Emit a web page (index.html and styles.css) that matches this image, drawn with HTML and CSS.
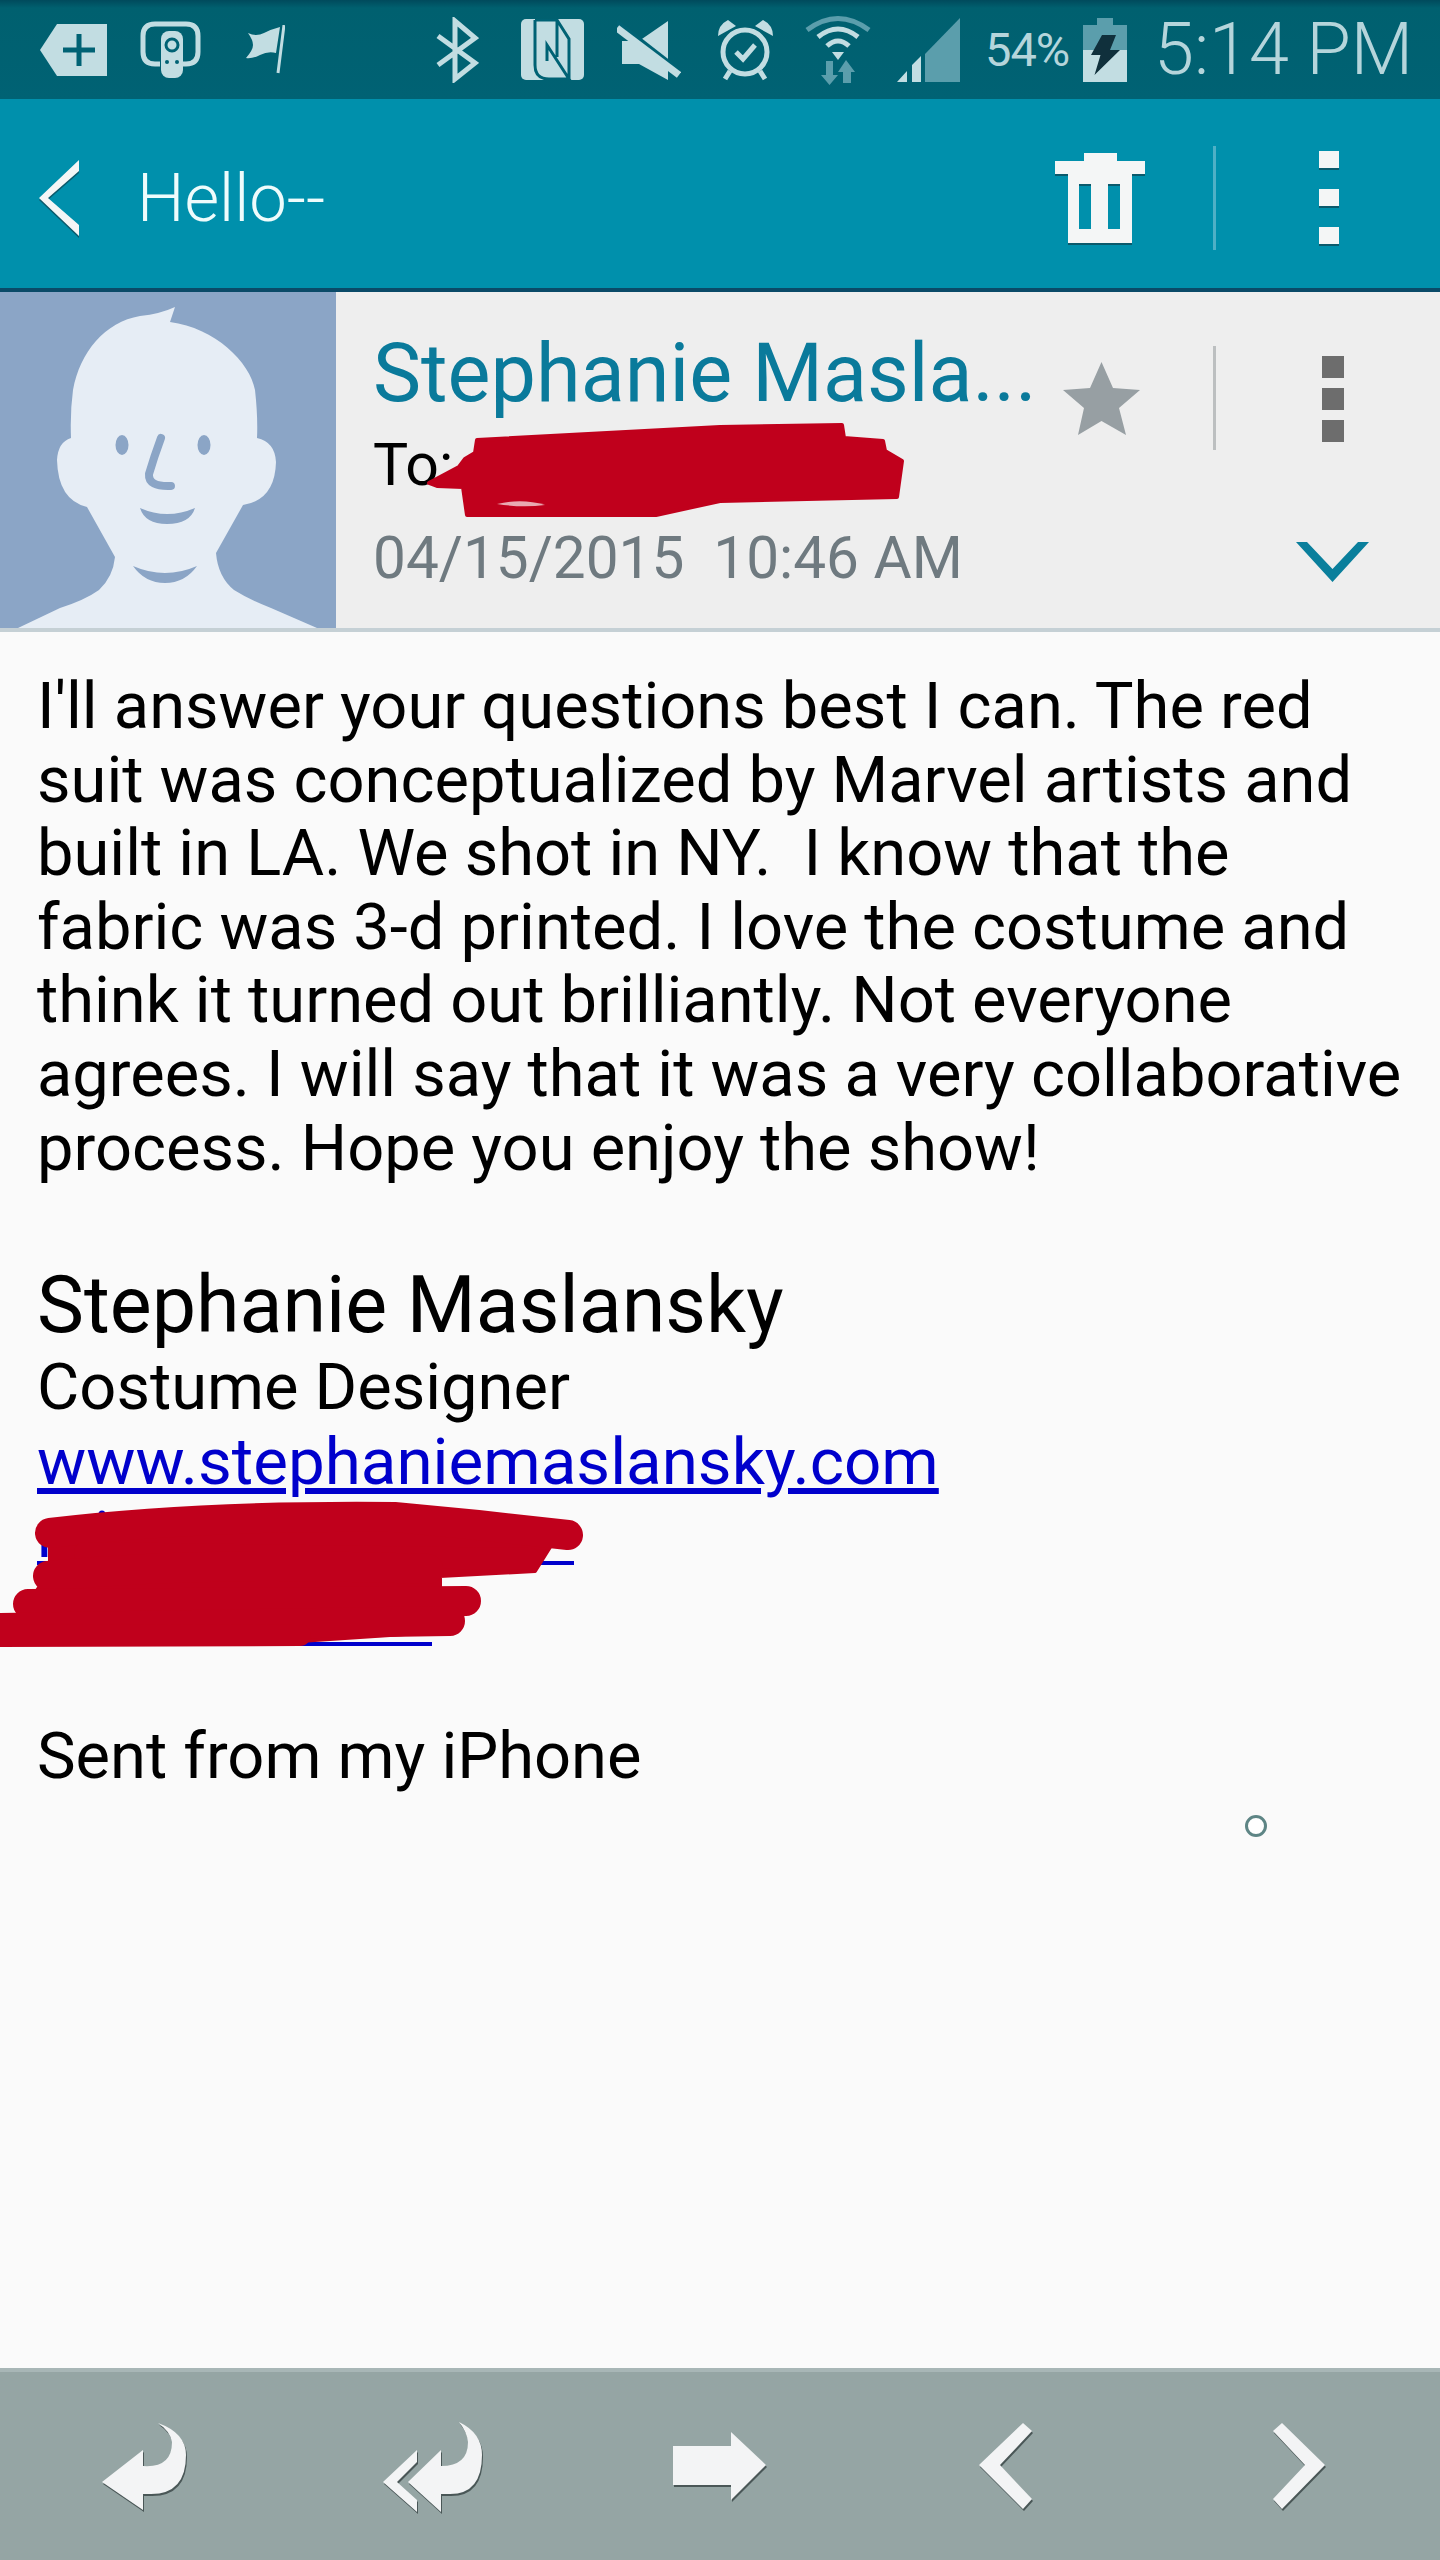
FILE: index.html
```html
<!DOCTYPE html>
<html lang="en">
<head>
    <meta charset="UTF-8">
    <meta name="viewport" content="width=device-width, initial-scale=1.0">
    <title>Hello--</title>
    <link rel="stylesheet" href="styles.css">
</head>
<body>
    <div class="phone">
        <div class="status-bar">
            <svg class="ic ic-tag" viewBox="0 0 67 52"><path class="lt" d="M0 26 17 0H67V52H17Z"/><path class="gap" d="M39 10V42M23 26H55"/></svg>
            <svg class="ic ic-remote" viewBox="0 0 61 57"><path class="line" d="M20 43H15Q3 43 3 31V15Q3 3 15 3H46Q58 3 58 15V31Q58 43 46 43H43"/><rect class="lt" x="21" y="10" width="22" height="47" rx="8"/><circle class="gap thin" cx="32" cy="24" r="6"/><circle class="dk" cx="27" cy="41" r="2"/><circle class="dk" cx="37" cy="41" r="2"/></svg>
            <svg class="ic ic-flag" viewBox="0 0 39 49"><path class="lt" d="M2 8Q10 12 18 8T34 2L30 28Q22 26 14 30T0 33Q7 25 7 20T2 8Z"/><path class="line thin" d="M38 0 32 48"/></svg>
            <svg class="ic ic-bt" viewBox="0 0 44 66"><path class="line" d="M3 19 40 46 20 62V4L40 21 3 48"/></svg>
            <svg class="ic ic-nfc" viewBox="0 0 63 61"><rect class="lt" width="63" height="61" rx="5"/><path class="gap thin" d="M14 1V46Q14 60 28 60H48L26 26V42M14 1H36L48 20V60M36 1V38"/></svg>
            <svg class="ic ic-mute" viewBox="0 0 64 60"><path class="lt" d="M5 21H22L51 1V60L22 44H5Z"/><path class="gap wide" d="M-2 2 62 52"/><path class="line wide" d="M0 8 62 55"/></svg>
            <svg class="ic ic-alarm" viewBox="0 0 59 62"><circle class="line" cx="29" cy="33" r="22"/><path class="lt" d="M2 17Q2 6 12 1L20 7ZM57 17Q57 6 47 1L39 7Z"/><path class="line" d="M14 52 9 60M44 52 49 60M20 33 27 40 39 26"/></svg>
            <svg class="ic ic-wifi" viewBox="0 0 66 70"><path class="line dim" d="M2 15Q33 -8 64 15"/><path class="line" d="M13 22Q33 6 53 22M22 31Q33 21 44 31"/><path class="lt" d="M27 37H39L33 45Z"/><path class="dimfill" d="M21 46H28V60H33L24.500 70 16 60H21ZM41 45 50 57H46V68H38V57H33Z"/></svg>
            <svg class="ic ic-signal" viewBox="0 0 63 64"><path class="dimfill" d="M28 36 63 0V64H28Z"/><path class="lt" d="M0 64 10 53V64ZM15 64V47L24 38V64Z"/></svg>
            <span class="battery-pct">54%</span>
            <svg class="ic ic-battery" viewBox="0 0 44 64"><path class="dimfill" d="M14 0H30V7H44V32H0V7H14Z"/><rect class="lt" y="32" width="44" height="32"/><path class="bolt" d="M19 17H33L27 32H37L11.500 57 17.500 37H8Z"/></svg>
            <span class="clock">5:14 PM</span>
        </div>

        <div class="app-bar">
            <svg class="back" viewBox="0 0 41 76"><path d="M40 0V11L9 38 40 65V76L0 38Z"/></svg>
            <span class="subject">Hello--</span>
            <svg class="trash" viewBox="0 0 90 90"><path d="M29 0H62V8H90V21H77V90H13V21H0V8H29ZM24 31V76H36V31ZM53 31V76H65V31Z" fill-rule="evenodd"/></svg>
            <div class="divider"></div>
            <div class="dots">
                <span></span>
                <span></span>
                <span></span>
            </div>
        </div>

        <div class="mail-header">
            <svg class="avatar" viewBox="0 0 336 336">
                <rect class="av-bg" width="336" height="336"/>
                <path class="av-face" d="M175 15 170 30C215 36 250 70 255 98Q258 125 257 146Q275 150 276 170Q275 208 243 213L216 261Q218 285 234 298Q250 308 271 316L317 336H18L60 316Q85 308 99 298Q113 285 115 265L87 215Q58 208 57 168Q58 150 71 146Q70 120 73 98C80 60 105 30 140 24Q160 22 175 15Z"/>
                <ellipse class="av-bg" cx="122" cy="153" rx="6.500" ry="10"/>
                <ellipse class="av-bg" cx="204" cy="153" rx="6.500" ry="10"/>
                <path class="av-nose" d="M161 146Q154 165 149 182Q148 195 171 194"/>
                <path class="av-bg" d="M140 216Q167 228 195 216Q190 232 167 232Q145 232 140 216Z"/>
                <path class="av-bg" d="M133 274Q165 288 197 274Q185 291 165 291Q145 291 133 274Z"/>
            </svg>
            <div class="sender">
                <div class="sender-name">Stephanie Masla...</div>
                <div class="sender-to">To:</div>
                <div class="sender-date">04/15/2015&nbsp; 10:46 AM</div>
            </div>
            <svg class="star" viewBox="0 0 77 73"><path d="M38.500 0 50 26 77 28 56 46 63 73 38.500 59 15 73 21 46 0 28 27 26Z"/></svg>
            <div class="divider divider-grey"></div>
            <div class="header-side">
                <div class="dots dots-grey">
                    <span></span>
                    <span></span>
                    <span></span>
                </div>
                <svg class="expand" viewBox="0 0 73 40"><path d="M0 0H11L36.500 27 62 0H73L36.500 40Z"/></svg>
            </div>
        </div>

        <div class="mail-body">
            <p class="msg">I'll answer your questions best I can. The red suit was conceptualized by Marvel artists and built in LA. We shot in NY.&nbsp; I know that the fabric was 3-d printed. I love the costume and think it turned out brilliantly. Not everyone agrees. I will say that it was a very collaborative process. Hope you enjoy the show!</p>
            <div class="sig-name">Stephanie Maslansky</div>
            <div>Costume Designer</div>
            <div><a class="site-link" href="#">www.stephaniemaslansky.com</a></div>
            <div class="hidden-link hidden-link-long"><a href="#">mi</a></div>
            <div class="hidden-link hidden-link-short"></div>
            <div class="sent">Sent from my iPhone</div>
        </div>

        <div class="bottom-bar">
            <svg class="act" viewBox="0 0 120 120"><path d="M18 76 59 44V60Q88 62 88 36 86 25 74 17 102 27 102 49 102 88 67 88H59V104Z"/></svg>
            <svg class="act" viewBox="0 0 120 120"><path d="M36 76 69 44V60Q96 60 96 36 95 26 87 16 110 27 110 49 110 88 78 88H69V106ZM11 76 45 44V56L25 76 45 94V106Z"/></svg>
            <svg class="act" viewBox="0 0 120 120"><path d="M13 40H71V26L106 59 71 94V79H13Z"/></svg>
            <svg class="act" viewBox="0 0 120 120"><path d="M31 59 75 17 84 25 52 59 84 93 75 103Z"/></svg>
            <svg class="act" viewBox="0 0 120 120"><path d="M89 59 46 17 37 25 69 59 37 93 46 103Z"/></svg>
        </div>

        <!-- marker scribbles and touch dot sit on top of the mail -->
        <svg class="scribble scribble-to" viewBox="0 0 480 100">
            <path class="brush" d="M2 60 32 44 38 36 48 30 50 17 293 4 415 2 417 15 456 18 458 28 475 38 470 74 293 78 229 92 40 92 36 64 10 63Z"/>
            <path class="streak" d="M70 81Q95 75 118 82 95 85 70 81Z"/>
        </svg>
        <svg class="scribble scribble-sig" viewBox="0 0 590 150">
            <path class="brush" d="M50 25 395 8 480 20 560 30 535 70 440 75 440 90 470 105 450 130 300 140 30 140 30 100 50 70Z"/>
            <path class="stroke" d="M50 32Q200 14 395 16L478 24 568 34"/>
            <path class="stroke stroke-small" d="M85 52 530 58"/>
            <path class="stroke" d="M48 75Q200 60 428 68"/>
            <path class="stroke" d="M28 103 466 100"/>
            <path class="stroke" d="M0 127 450 120"/>
            <path class="stroke stroke-small" d="M-10 135 300 134"/>
        </svg>
        <div class="touch-dot"></div>
    </div>
</body>
</html>
```

FILE: styles.css
```css
* { box-sizing: border-box; }
html, body { margin: 0; padding: 0; }
body { font-family: Roboto, "Liberation Sans", sans-serif; background: #fafafa; }
.phone { position: relative; width: 1440px; height: 2560px; display: flex; flex-direction: column; overflow: hidden; }

/* status bar */
.status-bar { height: 99px; display: flex; align-items: center; background: linear-gradient(#004a5c, #00606f 8px, #006274); color: #b5d5db; }
.ic { display: block; flex: none; }
.lt { fill: #c2dde2; }
.dk { fill: #006274; }
.dimfill { fill: #5b9eac; }
.bolt { fill: #10303c; }
.line { fill: none; stroke: #c2dde2; stroke-width: 5; }
.gap { fill: none; stroke: #006274; stroke-width: 5; }
.thin { stroke-width: 3; }
.wide { stroke-width: 7; }
.dim { stroke: #5b9eac; }
.ic-tag { width: 67px; height: 52px; margin-left: 40px; }
.ic-remote { width: 61px; height: 57px; margin-left: 33px; }
.ic-flag { width: 39px; height: 49px; margin-left: 45px; }
.ic-bt { width: 44px; height: 66px; margin-left: 150px; }
.ic-nfc { width: 63px; height: 61px; margin-left: 42px; }
.ic-mute { width: 64px; height: 60px; margin-left: 33px; }
.ic-alarm { width: 59px; height: 62px; margin-left: 35px; }
.ic-wifi { width: 66px; height: 70px; margin-left: 30px; }
.ic-signal { width: 63px; height: 64px; margin-left: 26px; }
.ic-battery { width: 44px; height: 64px; margin-left: 13px; }
.battery-pct { width: 85px; margin-left: 25px; font-size: 47px; letter-spacing: -1px; white-space: nowrap; }
.clock { margin-left: 27px; font-size: 72px; font-weight: 300; white-space: nowrap; }

/* title bar */
.app-bar { height: 193px; padding-top: 8px; display: flex; align-items: center; background: #0090ac; border-bottom: 4px solid #0a4a68; color: #eefcfc; }
.back { width: 41px; height: 76px; margin-left: 39px; fill: #f4f6f6; filter: drop-shadow(0 2px 0 #0b5a6c); }
.subject { margin-left: 57px; width: 918px; font-size: 67px; font-weight: 300; }
.trash { width: 90px; height: 90px; fill: #f4f6f6; filter: drop-shadow(0 2px 0 #0b5a6c); }
.divider { width: 3px; height: 104px; margin-left: 68px; background: #4fb0c6; }
.dots { width: 20px; margin-left: 103px; display: flex; flex-direction: column; gap: 21px; }
.dots span { display: block; height: 17px; background: #f4f6f6; box-shadow: 0 2px 0 #0b5a6c; }

/* sender block */
.mail-header { height: 340px; display: flex; align-items: flex-start; background: #eeeeee; border-bottom: 4px solid #c5d0d5; }
.avatar { display: block; flex: none; width: 336px; height: 336px; }
.av-bg { fill: #8ba5c6; }
.av-face { fill: #e6edf5; }
.av-nose { fill: none; stroke: #8ba5c6; stroke-width: 8; stroke-linecap: round; }
.sender { width: 727px; padding-left: 37px; }
.sender-name { margin-top: 38px; height: 88px; font-size: 81px; line-height: 88px; color: #0a7a9b; white-space: nowrap; }
.sender-to { margin-top: 16px; height: 62px; font-size: 59px; line-height: 62px; color: #000; }
.sender-date { margin-top: 31px; font-size: 58.500px; line-height: 62px; color: #6f7a80; white-space: nowrap; }
.star { flex: none; width: 77px; height: 73px; margin-top: 70px; fill: #979fa3; }
.divider-grey { margin-top: 54px; margin-left: 73px; background: #bcbfc0; }
.header-side { display: flex; flex-direction: column; align-items: center; margin-left: 80px; }
.dots-grey { width: 22px; margin: 64px 0 0; gap: 10px; }
.dots-grey span { height: 22px; background: #6d6d6d; box-shadow: none; }
.expand { display: block; width: 73px; height: 40px; margin-top: 100px; fill: #0a7f9c; }

/* mail text */
.mail-body { flex: 1; padding: 38px 30px 0 37px; font-size: 65px; line-height: 73.6px; color: #000; }
.msg { margin: 0 0 74px; }
.sig-name { font-size: 79px; line-height: 92px; }
.mail-body a { color: #0000cc; }
.site-link { font-size: 65.500px; }
.hidden-link { height: 73.6px; }
.hidden-link-long { height: 66px; width: 537px; border-bottom: 4px solid #0000cc; }
.hidden-link-long a { text-decoration: none; }
.hidden-link-short { height: 81px; width: 395px; border-bottom: 4px solid #0000cc; }
.sent { margin-top: 73.6px; }

/* actions */
.bottom-bar { height: 192px; display: grid; grid-template-columns: repeat(5, 1fr); justify-items: center; align-items: center; background: #95a5a4; border-top: 4px solid #a8b6b6; }
.act { width: 120px; height: 120px; fill: #f3f4f5; filter: drop-shadow(1px 2px 0 #4a5757); }

/* overlays */
.scribble { position: absolute; overflow: visible; }
.brush { fill: #c0001c; stroke: #c0001c; stroke-width: 4; stroke-linejoin: round; }
.streak { fill: #e9a9b2; }
.stroke { fill: none; stroke: #c0001c; stroke-width: 30; stroke-linecap: round; }
.stroke-small { stroke-width: 22; }
.scribble-to { left: 427px; top: 423px; width: 480px; height: 100px; }
.scribble-sig { left: 0; top: 1501px; width: 590px; height: 150px; }
.touch-dot { position: absolute; left: 1245px; top: 1815px; width: 22px; height: 22px; border: 3px solid #5e8585; border-radius: 50%; background: #fff; }
```
